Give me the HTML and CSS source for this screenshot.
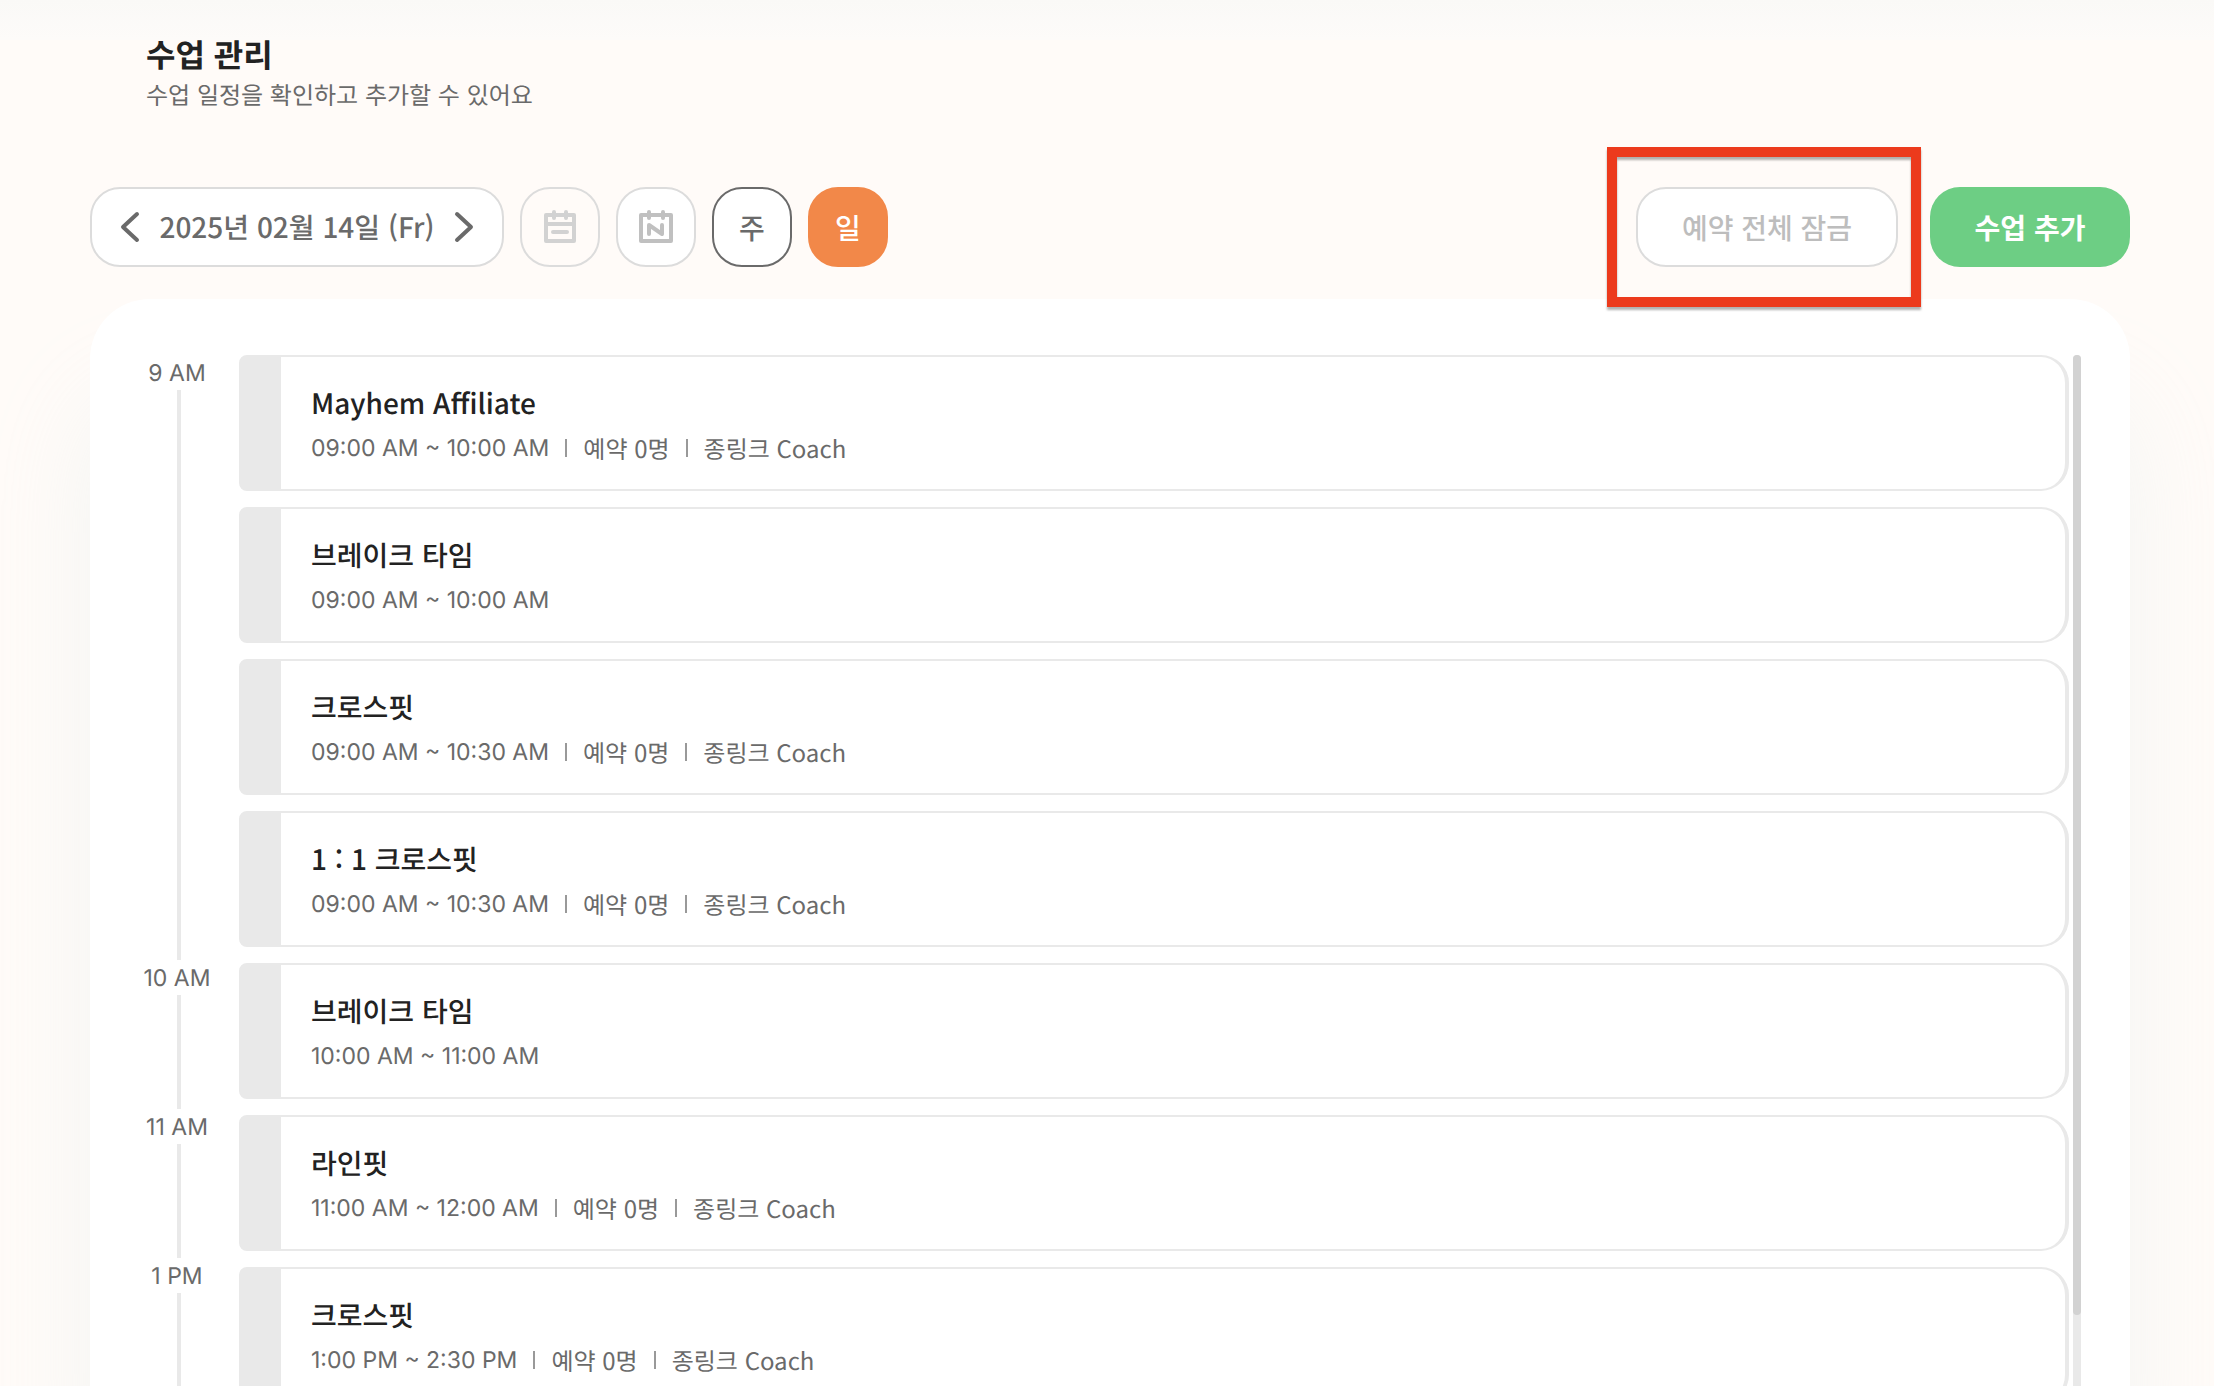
FILE: index.html
```html
<!DOCTYPE html>
<html lang="ko">
<head>
<meta charset="utf-8">
<meta name="viewport" content="width=device-width, initial-scale=1">
<title>수업 관리</title>
<link rel="stylesheet" href="styles.css">
</head>
<body>
<header class="page-header">
  <h1 class="page-title">수업 관리</h1>
  <p class="page-desc">수업 일정을 확인하고 추가할 수 있어요</p>
</header>
<main class="content">
  <div class="toolbar">
    <div class="date-nav">
      <button class="arrow" type="button" aria-label="이전 날짜">
        <svg width="22" height="32" viewBox="0 0 22 32"><path d="M18 3 4 16l14 13"/></svg>
      </button>
      <span class="date">2025년 02월 14일 (Fr)</span>
      <button class="arrow" type="button" aria-label="다음 날짜">
        <svg width="22" height="32" viewBox="0 0 22 32"><path d="m4 3 14 13L4 29"/></svg>
      </button>
    </div>
    <button class="square muted" type="button" aria-label="달력" disabled>
      <svg width="32" height="34" viewBox="0 0 32 34"><path d="M2 5h28v26H2zM2 14h28M9 22h14M10 2v6M22 2v6"/></svg>
    </button>
    <button class="square icon" type="button" aria-label="오늘">
      <svg width="36" height="36" viewBox="0 0 36 36"><path d="M3 6h30v26H3z"/><path d="M11 25V16l13 9v-9M11 3v6M25 3v6"/></svg>
    </button>
    <button class="square week" type="button">주</button>
    <button class="square day" type="button" aria-pressed="true">일</button>
    <div class="actions">
      <div class="callout"><button class="lock" type="button">예약 전체 잠금</button></div>
      <button class="add" type="button">수업 추가</button>
    </div>
  </div>

  <section class="panel">
    <ol class="hours">
      <li class="hour" style="--slots: 4"><span class="hour-label">9 AM</span></li>
      <li class="hour" style="--slots: 1"><span class="hour-label">10 AM</span></li>
      <li class="hour" style="--slots: 1"><span class="hour-label">11 AM</span></li>
      <li class="hour" style="--slots: 1"><span class="hour-label">1 PM</span></li>
    </ol>
    <ul class="classes">
      <li class="card"><h2 class="name">Mayhem Affiliate</h2><p class="meta"><time class="time">09:00 AM ~ 10:00 AM</time><span class="item">예약 0명</span><span class="item">종링크 Coach</span></p></li>
      <li class="card"><h2 class="name">브레이크 타임</h2><p class="meta"><time class="time">09:00 AM ~ 10:00 AM</time></p></li>
      <li class="card"><h2 class="name">크로스핏</h2><p class="meta"><time class="time">09:00 AM ~ 10:30 AM</time><span class="item">예약 0명</span><span class="item">종링크 Coach</span></p></li>
      <li class="card"><h2 class="name">1 : 1 크로스핏</h2><p class="meta"><time class="time">09:00 AM ~ 10:30 AM</time><span class="item">예약 0명</span><span class="item">종링크 Coach</span></p></li>
      <li class="card"><h2 class="name">브레이크 타임</h2><p class="meta"><time class="time">10:00 AM ~ 11:00 AM</time></p></li>
      <li class="card"><h2 class="name">라인핏</h2><p class="meta"><time class="time">11:00 AM ~ 12:00 AM</time><span class="item">예약 0명</span><span class="item">종링크 Coach</span></p></li>
      <li class="card"><h2 class="name">크로스핏</h2><p class="meta"><time class="time">1:00 PM ~ 2:30 PM</time><span class="item">예약 0명</span><span class="item">종링크 Coach</span></p></li>
    </ul>
    <div class="scroll-track"><div class="scroll-thumb"></div></div>
  </section>
</main>
</body>
</html>
```
FILE: styles.css
```css
:root {
  --kr: "Noto Sans CJK KR", "Noto Sans", sans-serif;
  --latin: Inter, "Noto Sans CJK KR", sans-serif;
  --line: #e9e9e9;
  --gray: #6a6a6a;
}
* { box-sizing: border-box; }
body {
  margin: 0;
  height: 100vh;
  overflow: hidden;
  display: flex;
  flex-direction: column;
  background: linear-gradient(#faf9f7, #fdfbf9) 0 0 / 100% 40px no-repeat, #fffbf8;
  color: #222;
  font-family: var(--kr);
  text-rendering: geometricPrecision;
}
h1, h2, p, ol, ul { margin: 0; padding: 0; list-style: none; }
button {
  padding: 0;
  border: 0;
  background: none;
  color: inherit;
  font: inherit;
}
svg {
  display: block;
  fill: none;
  stroke: currentColor;
  stroke-width: 4;
  stroke-linecap: round;
  stroke-linejoin: round;
}
.page-header { padding: 32px 146px 0; }
.page-title { font-size: 32px; font-weight: 700; line-height: 44px; }
.page-desc { font-size: 24px; line-height: 36px; color: var(--gray); }

.content {
  flex: 1;
  display: flex;
  flex-direction: column;
  min-height: 0;
  padding: 75px 84px 0 90px;
}
.toolbar {
  display: flex;
  gap: 16px;
  height: 80px;
  margin-bottom: 32px;
  font-size: 28px;
  font-weight: 500;
}
.date-nav {
  display: flex;
  align-items: center;
  justify-content: space-between;
  width: 414px;
  padding: 0 27px;
  border: 2px solid #dcdcdc;
  border-radius: 30px;
  background: #fff;
  color: var(--gray);
}
.square {
  display: grid;
  place-items: center;
  width: 80px;
  border: 2px solid #dcdcdc;
  border-radius: 30px;
  background: #fff;
}
.muted { background: transparent; color: #d2d2d2; }
.icon { color: #c0c0c0; }
.week { border-color: var(--gray); color: var(--gray); }
.day { border-color: #f28849; background: #f28849; color: #fff; }

.actions { display: flex; gap: 32px; margin-left: auto; }
.callout { position: relative; display: flex; }
.callout::after {
  content: "";
  position: absolute;
  inset: -40px -23px -40px -29px;
  border: 10px solid #ec3a1c;
  filter: drop-shadow(0 3px 1px rgba(0, 0, 0, .3));
  pointer-events: none;
}
.lock {
  width: 262px;
  border: 2px solid #dcdcdc;
  border-radius: 30px;
  background: #fff;
  color: #bdbdbd;
}
.add {
  width: 200px;
  border-radius: 30px;
  background: #6dce84;
  color: #fff;
  font-weight: 700;
}

.panel {
  flex: 1;
  display: flex;
  align-items: flex-start;
  min-height: 0;
  padding: 56px 49px 0 49px;
  border-radius: 60px 60px 0 0;
  background: #fff;
  box-shadow: 0 100px 100px rgba(205, 230, 236, .24);
}
.hours { width: 76px; margin-right: 24px; }
.hour {
  display: flex;
  flex-direction: column;
  align-items: center;
  height: calc(var(--slots) * 152px - 3px);
}
.hour-label {
  height: 35px;
  font-family: var(--latin);
  font-size: 23px;
  line-height: 37px;
  color: var(--gray);
  white-space: nowrap;
}
.hour::after { content: ""; flex: 1; width: 4px; margin-left: 4px; background: var(--line); }
.classes { flex: 1; display: flex; flex-direction: column; gap: 16px; }
.card {
  height: 136px;
  padding: 26px 30px;
  border: solid var(--line);
  border-width: 2px 4px 2px 42px;
  border-radius: 8px 28px 28px 8px;
}
.name { font-size: 28px; font-weight: 500; line-height: 40px; }
.meta { display: flex; align-items: center; font-size: 24px; line-height: 50px; color: var(--gray); }
.time { font-family: var(--latin); font-size: 23px; }
.item { display: flex; align-items: center; }
.item::before { content: ""; width: 2px; height: 18px; margin: 0 16px; background: #999; }
.scroll-track { align-self: stretch; width: 8px; margin-left: 4px; background: var(--line); border-radius: 4px 4px 0 0; }
.scroll-thumb { height: 960px; border-radius: 4px; background: #d2d2d2; }
```
